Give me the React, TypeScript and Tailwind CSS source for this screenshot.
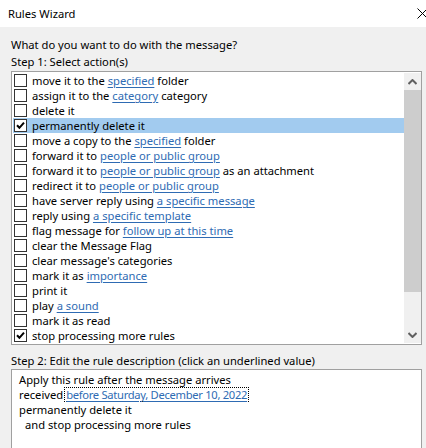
import React from 'react';

type Part = { t: string; link?: boolean };
type Action = { parts: Part[]; checked?: boolean; selected?: boolean };

const actions: Action[] = [
  { parts: [{ t: 'move it to the ' }, { t: 'specified', link: true }, { t: ' folder' }] },
  { parts: [{ t: 'assign it to the ' }, { t: 'category', link: true }, { t: ' category' }] },
  { parts: [{ t: 'delete it' }] },
  { parts: [{ t: 'permanently delete it' }], checked: true, selected: true },
  { parts: [{ t: 'move a copy to the ' }, { t: 'specified', link: true }, { t: ' folder' }] },
  { parts: [{ t: 'forward it to ' }, { t: 'people or public group', link: true }] },
  { parts: [{ t: 'forward it to ' }, { t: 'people or public group', link: true }, { t: ' as an attachment' }] },
  { parts: [{ t: 'redirect it to ' }, { t: 'people or public group', link: true }] },
  { parts: [{ t: 'have server reply using ' }, { t: 'a specific message', link: true }] },
  { parts: [{ t: 'reply using ' }, { t: 'a specific template', link: true }] },
  { parts: [{ t: 'flag message for ' }, { t: 'follow up at this time', link: true }] },
  { parts: [{ t: 'clear the Message Flag' }] },
  { parts: [{ t: "clear message's categories" }] },
  { parts: [{ t: 'mark it as ' }, { t: 'importance', link: true }] },
  { parts: [{ t: 'print it' }] },
  { parts: [{ t: 'play ' }, { t: 'a sound', link: true }] },
  { parts: [{ t: 'mark it as read' }] },
  { parts: [{ t: 'stop processing more rules' }], checked: true },
];

function Checkbox({ checked }: { checked?: boolean }) {
  return (
    <div className="w-[13px] h-[13px] shrink-0 border border-[#333333] bg-white flex items-center justify-center">
      {checked && (
        <svg width="9" height="9" viewBox="0 0 9 9">
          <path d="M1 4.3 L3.4 6.8 L8 1.6" fill="none" stroke="#000" strokeWidth="2" />
        </svg>
      )}
    </div>
  );
}

function Chevron({ up }: { up?: boolean }) {
  return (
    <svg width="9" height="6" viewBox="0 0 9 6">
      <path
        d={up ? 'M0.5 5 L4.5 1 L8.5 5' : 'M0.5 1 L4.5 5 L8.5 1'}
        fill="none"
        stroke="#606060"
        strokeWidth="2"
      />
    </svg>
  );
}

export default function App() {
  return (
    <div
      className="w-[426px] h-[448px] overflow-hidden bg-[#f0f0f0] text-[11.2px] leading-[15px] text-black"
      style={{ fontFamily: '"Noto Sans", "Liberation Sans", sans-serif' }}
    >
      <div className="h-[27px] bg-white flex items-center justify-between pl-[8px]">
        <span>Rules Wizard</span>
        <svg width="11" height="11" viewBox="0 0 11 11" className="mr-[-2px]">
          <path d="M0.5 0.5 L10.5 10.5 M10.5 0.5 L0.5 10.5" stroke="#000" strokeWidth="1" />
        </svg>
      </div>

      <div className="pl-[11px] pr-[4px] pt-[10px]">
        <div className="h-[15px]">What do you want to do with the message?</div>
        <div className="h-[15px] mt-[2px]">Step 1: Select action(s)</div>

        <div className="mt-[2px] border border-[#a0a0a0] bg-white h-[274px] flex">
          <div className="flex-1 pl-[1px] pt-[1px]">
            {actions.map((a, i) => (
              <div
                key={i}
                className={`h-[15px] flex items-center pl-[1px] whitespace-nowrap ${a.selected ? 'bg-[#a2cbef]' : ''}`}
              >
                <Checkbox checked={a.checked} />
                <span className="ml-[5px]">
                  {a.parts.map((p, j) =>
                    p.link ? (
                      <span key={j} className="text-[#2e6bb3] underline underline-offset-2">
                        {p.t}
                      </span>
                    ) : (
                      <span key={j}>{p.t}</span>
                    )
                  )}
                </span>
              </div>
            ))}
          </div>
          <div className="w-[17px] mt-[1px] mb-[1px] bg-[#f0f0f0] flex flex-col">
            <div className="h-[17px] flex items-center justify-center">
              <Chevron up />
            </div>
            <div className="h-[202px] bg-[#cdcdcd]" />
            <div className="flex-1 flex items-end justify-center pb-[5px]">
              <Chevron />
            </div>
          </div>
        </div>

        <div className="h-[15px] mt-[8px]">Step 2: Edit the rule description (click an underlined value)</div>

        <div className="mt-[1px] border border-[#a0a0a0] bg-white h-[90px] pl-[7px] pt-[2px]">
          <div className="h-[15px]">Apply this rule after the message arrives</div>
          <div className="h-[15px] flex items-center">
            <span>received</span>
            <span className="ml-[1px] border border-dotted border-black px-[1px] h-[15px] flex items-center text-[#2e6bb3] underline underline-offset-2 tracking-[-0.3px]">
              before Saturday, December 10, 2022
            </span>
          </div>
          <div className="h-[15px]">permanently delete it</div>
          <div className="h-[15px] pl-[6px]">and stop processing more rules</div>
        </div>
      </div>
    </div>
  );
}
